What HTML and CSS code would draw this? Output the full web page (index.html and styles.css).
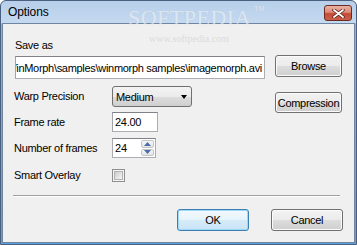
FILE: index.html
```html
<!DOCTYPE html>
<html lang="en">

<head>
    <meta charset="UTF-8">
    <title>Options</title>
    <link rel="stylesheet" href="styles.css">
</head>

<body>
    <div class="window">
        <div class="titlebar">
            <span class="title">Options</span>
            <span class="close-btn">
                <svg width="13" height="9" viewBox="0 0 13 9">
                    <path d="M2 1 L11 8 M11 1 L2 8" stroke="#5a1f18" stroke-width="3.4" stroke-linecap="round" />
                    <path d="M2 1 L11 8 M11 1 L2 8" stroke="#ffffff" stroke-width="1.8" stroke-linecap="round" />
                </svg>
            </span>
        </div>

        <div class="watermark">SOFTPEDIA<sup>TM</sup></div>
        <div class="watermark-url">www.softpedia.com</div>

        <div class="client">
            <div class="top">
                <div class="left">
                    <div class="label">Save as</div>
                    <div class="textbox path-box">
                        <span>C:\Program Files\WinMorph\samples\winmorph samples\imagemorph.avi</span>
                    </div>

                    <div class="form">
                        <div class="form-row">
                            <span class="label">Warp Precision</span>
                            <div class="combo">
                                <span>Medium</span>
                                <span class="arrow"></span>
                            </div>
                        </div>
                        <div class="form-row row-rate">
                            <span class="label">Frame rate</span>
                            <div class="textbox rate-box">24.00</div>
                        </div>
                        <div class="form-row row-frames">
                            <span class="label">Number of frames</span>
                            <div class="spin">
                                <span class="spin-value">24</span>
                                <div class="spin-buttons">
                                    <span class="spin-btn">
                                        <svg width="7" height="4" viewBox="0 0 7 4"><path d="M0 4 L3.5 0 L7 4 Z" fill="#4a6ea8" /></svg>
                                    </span>
                                    <span class="spin-btn">
                                        <svg width="7" height="4" viewBox="0 0 7 4"><path d="M0 0 L3.5 4 L7 0 Z" fill="#4a6ea8" /></svg>
                                    </span>
                                </div>
                            </div>
                        </div>
                        <div class="form-row row-overlay">
                            <span class="label">Smart Overlay</span>
                            <span class="checkbox"><span class="checkbox-inner"></span></span>
                        </div>
                    </div>
                </div>

                <div class="right">
                    <button class="btn browse-btn">Browse</button>
                    <button class="btn compression-btn">Compression</button>
                </div>
            </div>

            <div class="separator"></div>

            <div class="actions">
                <button class="btn btn-default">OK</button>
                <button class="btn">Cancel</button>
            </div>
        </div>
    </div>
</body>

</html>
```

FILE: styles.css
```css
body {
    margin: 0;
    font-family: "Liberation Sans", Arial, sans-serif;
    font-size: 11px;
    color: #000;
    background: #ffffff;
}

.window {
    position: relative;
    width: 357px;
    height: 245px;
    box-sizing: border-box;
    border: 1px solid #4a6080;
    border-radius: 6px 6px 0 0;
    padding: 0 1px 1px 1px;
    background: linear-gradient(#b7cfea, #c5d9f0 22px, #7fb8e6 23px, #5aa0dc);
    display: flex;
    flex-direction: column;
    overflow: hidden;
}

.titlebar {
    height: 22px;
    display: flex;
    align-items: center;
    justify-content: space-between;
    padding: 0 3px 0 6px;
}

.title {
    font-size: 12px;
    letter-spacing: -0.1px;
    color: #000;
}

.close-btn {
    width: 26px;
    height: 14px;
    border: 1px solid #6b2a22;
    border-radius: 3px;
    background: linear-gradient(#eab2a5, #dc8a78 45%, #c54a36 55%, #c9614a);
    display: flex;
    align-items: center;
    justify-content: center;
    margin-top: 2px;
}

.watermark {
    position: absolute;
    left: 127px;
    top: 4px;
    font-family: "Liberation Serif", "Times New Roman", serif;
    font-size: 22px;
    letter-spacing: 0.5px;
    color: rgba(255, 255, 255, 0.55);
    text-shadow: 0 0 1px rgba(160, 180, 200, 0.4);
    pointer-events: none;
}

.watermark sup {
    font-family: "Liberation Sans", Arial, sans-serif;
    font-size: 7px;
    vertical-align: top;
    margin-left: 3px;
}

.watermark-url {
    position: absolute;
    left: 148px;
    top: 32px;
    font-family: "Liberation Serif", serif;
    font-size: 10px;
    color: #dcdcdc;
    pointer-events: none;
}

.client {
    flex: 1;
    background: #f0f0f0;
    border: 1px solid #6f86a3;
    display: flex;
    flex-direction: column;
}

.top {
    display: flex;
    gap: 10px;
    padding: 15px 12px 0 12px;
}

.left {
    width: 250px;
    display: flex;
    flex-direction: column;
}

.label {
    line-height: 13px;
    letter-spacing: -0.3px;
    white-space: nowrap;
}

.textbox {
    box-sizing: border-box;
    background: #fff;
    border: 1px solid #abadb3;
    border-top-color: #7f8388;
    border-left-color: #a0a3a8;
    display: flex;
    align-items: center;
    white-space: nowrap;
    overflow: hidden;
    letter-spacing: -0.3px;
}

.path-box {
    margin-top: 4px;
    height: 23px;
    justify-content: flex-end;
    padding-right: 2px;
}

.form {
    margin-top: 7px;
    display: flex;
    flex-direction: column;
}

.form-row {
    display: grid;
    grid-template-columns: 98px auto;
    align-items: center;
    justify-items: start;
    height: 21px;
    margin-left: -1px;
}

.row-rate {
    margin-top: 5px;
    height: 20px;
}

.row-frames {
    margin-top: 6px;
    height: 20px;
}

.row-overlay {
    margin-top: 11px;
    height: 13px;
}

.combo {
    box-sizing: border-box;
    width: 80px;
    height: 21px;
    border: 1px solid #707070;
    border-radius: 3px;
    background: linear-gradient(#f3f3f3, #ebebeb 50%, #dddddd 50%, #cfcfcf);
    display: flex;
    align-items: center;
    justify-content: space-between;
    padding: 0 4px 0 3px;
    letter-spacing: -0.3px;
}

.arrow {
    width: 0;
    height: 0;
    border-left: 3.5px solid transparent;
    border-right: 3.5px solid transparent;
    border-top: 4px solid #000;
}

.rate-box {
    width: 46px;
    height: 20px;
    padding-left: 2px;
}

.spin {
    box-sizing: border-box;
    width: 44px;
    height: 20px;
    background: #fff;
    border: 1px solid #abadb3;
    border-top-color: #7f8388;
    display: flex;
    justify-content: space-between;
}

.spin-value {
    padding-left: 2px;
    line-height: 18px;
}

.spin-buttons {
    display: flex;
    flex-direction: column;
    gap: 1px;
    padding: 1px 1px 1px 0;
}

.spin-btn {
    box-sizing: border-box;
    width: 13px;
    flex: 1;
    border: 1px solid #c2c6cc;
    border-radius: 2px;
    background: linear-gradient(#f6f6f6, #e4e4e4);
    display: flex;
    align-items: center;
    justify-content: center;
}

.checkbox {
    box-sizing: border-box;
    width: 13px;
    height: 13px;
    border: 1px solid #8e8f8f;
    background: #f4f4f4;
    padding: 1px;
    display: flex;
}

.checkbox-inner {
    flex: 1;
    border: 1px solid #b3b3b3;
    background: linear-gradient(135deg, #cbcbcb, #f6f6f6);
}

.right {
    width: 67px;
    display: flex;
    flex-direction: column;
}

.btn {
    box-sizing: border-box;
    width: 67px;
    height: 22px;
    padding: 0;
    font-family: "Liberation Sans", Arial, sans-serif;
    font-size: 11px;
    letter-spacing: -0.3px;
    color: #000;
    border: 1px solid #707070;
    border-radius: 3px;
    background: linear-gradient(#f2f2f2, #ebebeb 50%, #dddddd 50%, #cfcfcf);
    box-shadow: inset 0 0 0 1px #fbfbfb;
}

.browse-btn {
    margin-top: 16px;
}

.compression-btn {
    margin-top: 15px;
    height: 21px;
}

.separator {
    margin: 13px 14px 0 10px;
    height: 1px;
    background: #a0a0a0;
    box-shadow: 0 1px 0 #ffffff;
}

.actions {
    display: flex;
    justify-content: flex-end;
    gap: 22px;
    margin-top: 13px;
    padding-right: 11px;
}

.actions .btn {
    width: 72px;
}

.btn-default {
    border-color: #3c7fb1;
    background: linear-gradient(#f3f9fd, #e6f3fb 50%, #d6ebf8 50%, #c9e3f6);
    box-shadow: inset 0 0 0 1px #9fd8f5;
}
```
